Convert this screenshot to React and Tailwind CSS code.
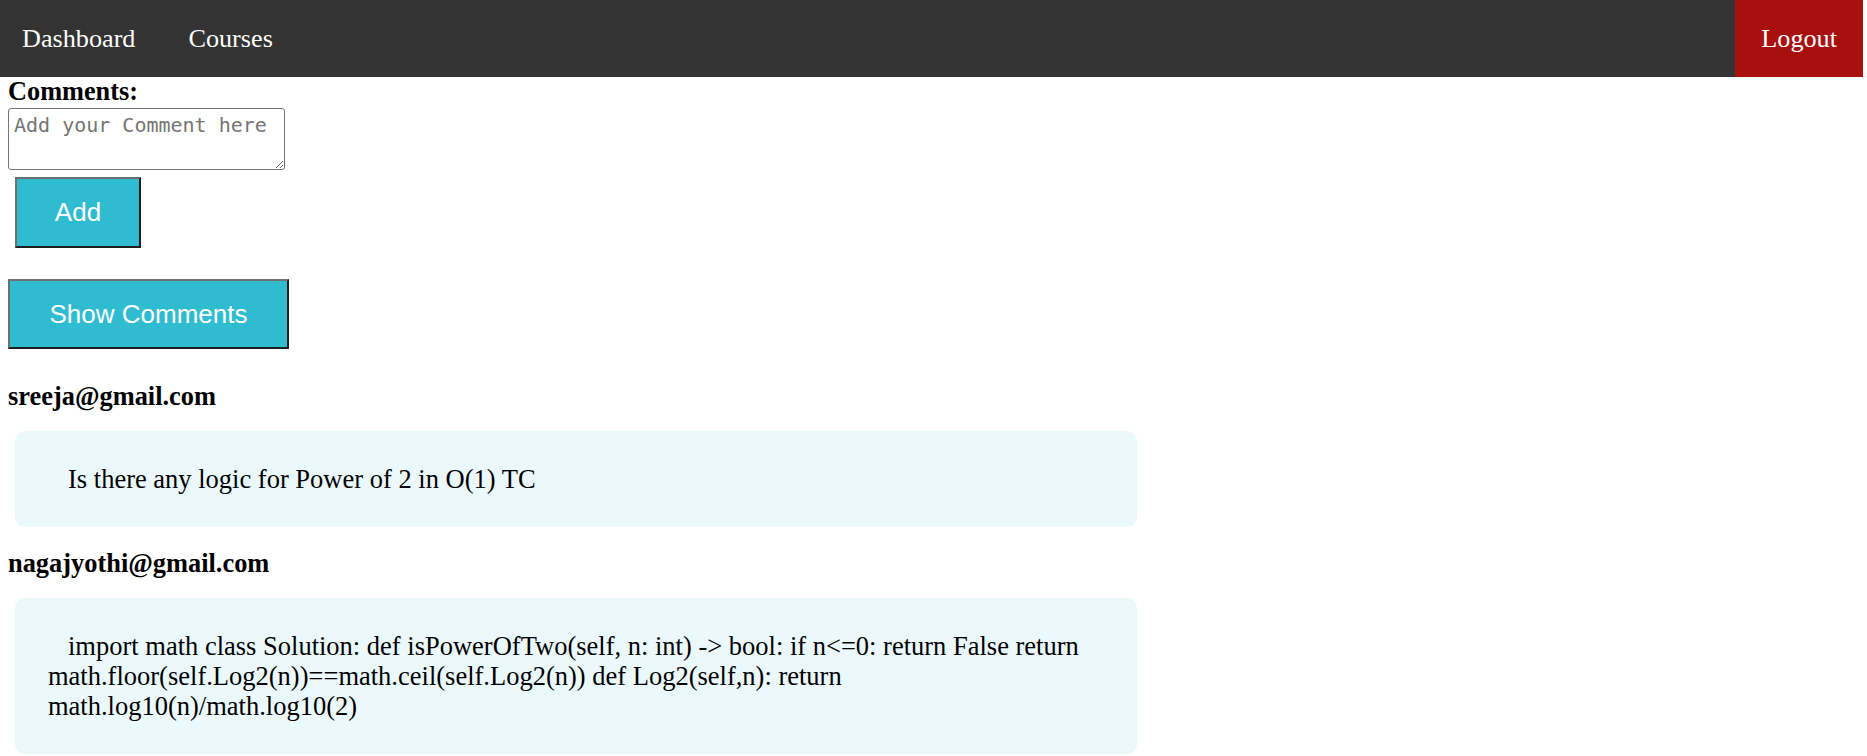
import { useState } from "react"

const comments = [
  { email: "sreeja@gmail.com", text: "Is there any logic for Power of 2 in O(1) TC" },
  {
    email: "nagajyothi@gmail.com",
    text: "import math class Solution: def isPowerOfTwo(self, n: int) -> bool: if n<=0: return False return math.floor(self.Log2(n))==math.ceil(self.Log2(n)) def Log2(self,n): return math.log10(n)/math.log10(2)",
  },
]

export default function App() {
  const [comment, setComment] = useState("")
  const [show, setShow] = useState(true)

  return (
    <div className="min-h-screen bg-white font-['Liberation_Serif',serif] text-black">
      {/* NAV */}
      <nav className="w-[1863px] h-[77px] bg-[#333333] flex items-stretch text-white text-[26.2px]">
        <a className="flex items-center pl-[22px] pr-[27px]">Dashboard</a>
        <a className="flex items-center px-[26px]">Courses</a>
        <a className="ml-auto flex items-center px-[26px] bg-[#a81010]">Logout</a>
      </nav>

      <div className="pl-[8px]">
        <div className="font-bold text-[26.3px] leading-[30px]">Comments:</div>
        <textarea
          value={comment}
          onChange={(e) => setComment(e.target.value)}
          placeholder="Add your Comment here"
          className="block mt-[1px] w-[277px] h-[62px] p-[5px] border border-[#767676] rounded-[3px] font-['DejaVu_Sans_Mono',monospace] text-[20px] leading-[23px] placeholder:text-[#757575] resize"
        />
        <button
          className="block mt-[7px] ml-[7px] w-[126px] h-[71px] bg-[#30bcd0] text-white text-[26px] font-['Liberation_Sans',Arial,sans-serif] border-2 border-t-[#6e6e6e] border-l-[#6e6e6e] border-b-[#1e1e1e] border-r-[#1e1e1e]"
        >
          Add
        </button>
        <button
          onClick={() => setShow(!show)}
          className="block mt-[31px] w-[281px] h-[70px] bg-[#30bcd0] text-white text-[26px] font-['Liberation_Sans',Arial,sans-serif] border-2 border-t-[#6e6e6e] border-l-[#6e6e6e] border-b-[#1e1e1e] border-r-[#1e1e1e]"
        >
          Show Comments
        </button>

        {show && (
          <div className="pt-[11px]">
            {comments.map((c) => (
              <div key={c.email}>
                <div className="mt-[21px] font-bold text-[26.4px] leading-[30px]">{c.email}</div>
                <div className="mt-[20px] ml-[7px] w-[1122px] rounded-[10px] bg-[#ebf9fd] p-[33px] text-[26.5px] leading-[30px] indent-[20px]">
                  {c.text}
                </div>
              </div>
            ))}
          </div>
        )}
      </div>
    </div>
  )
}
